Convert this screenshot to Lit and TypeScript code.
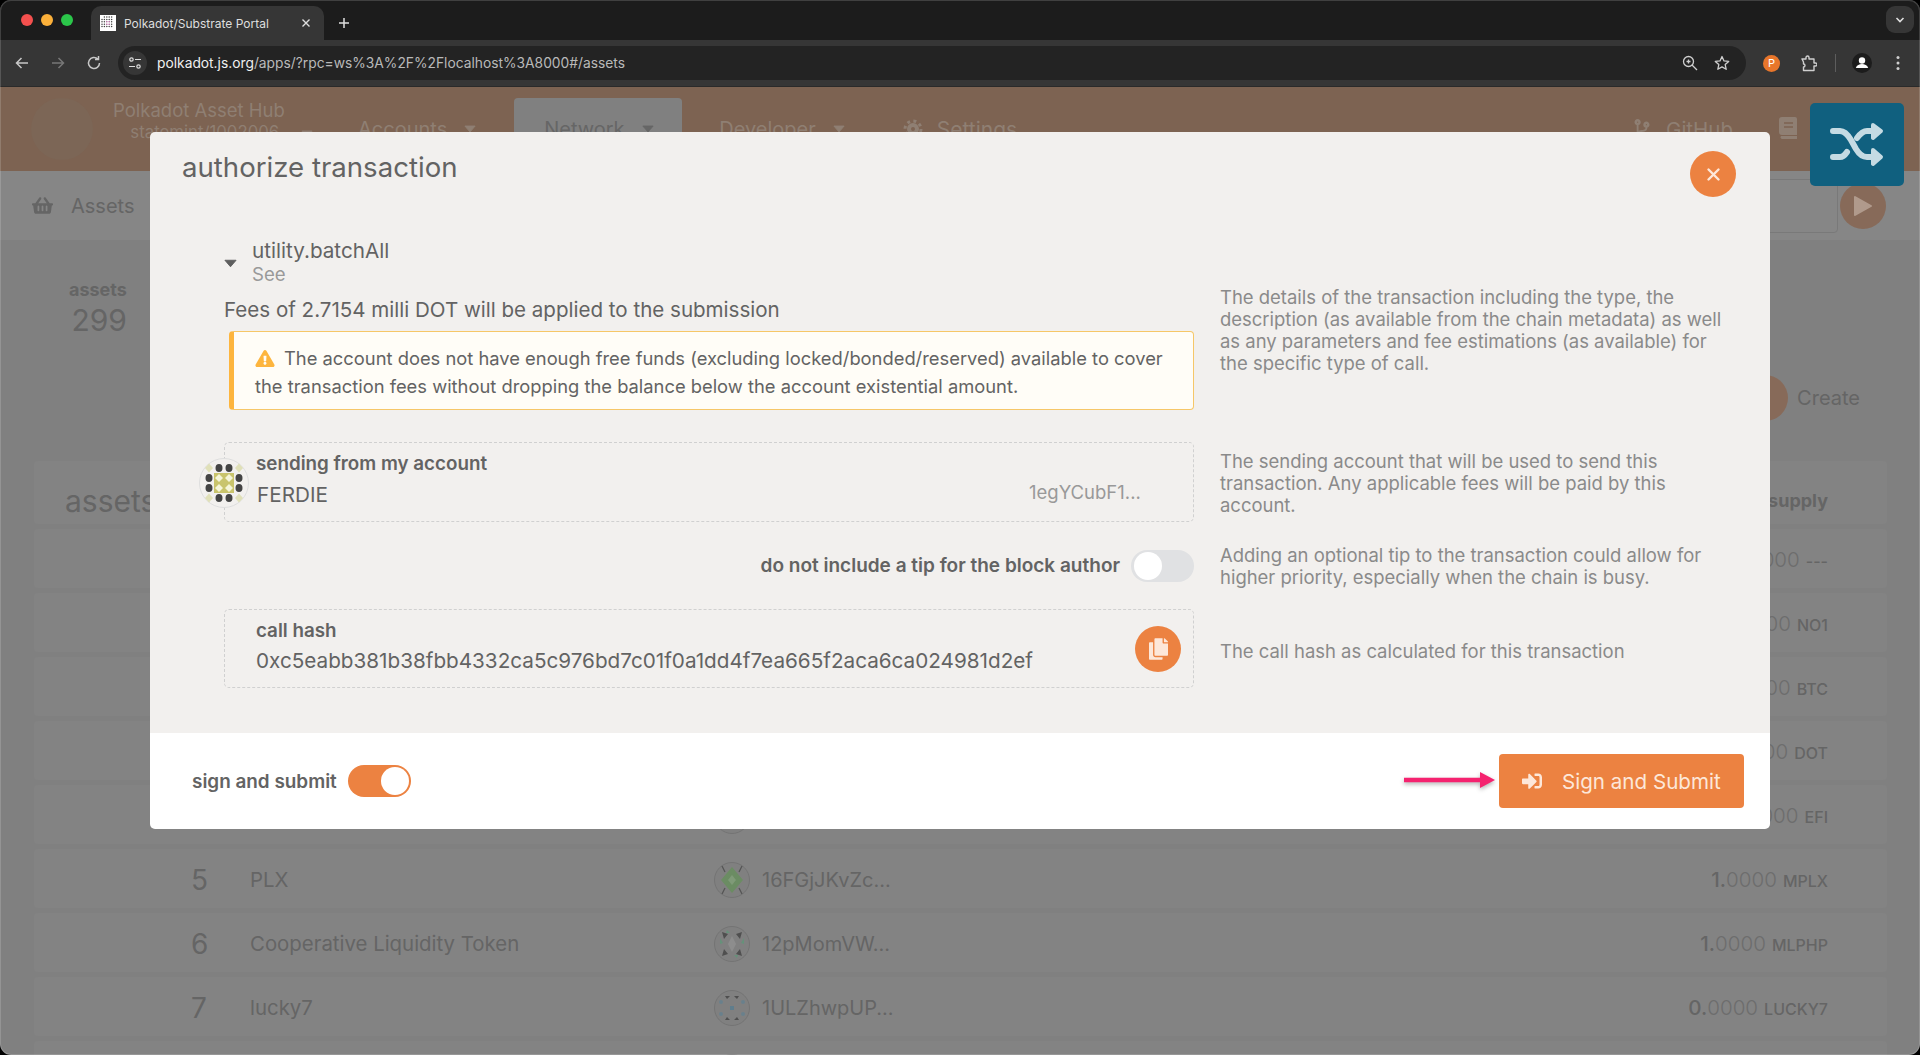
import { LitElement, html, css, svg } from 'lit';
import { customElement } from 'lit/decorators.js';

interface AssetRow {
  id?: number;
  name?: string;
  address?: string;
  whole?: string;
  ticker?: string;
  kind: 'plain' | 'diamond' | 'shards' | 'ring';
}

const ROWS: AssetRow[] = [
  { id: 0, name: 'Asset 0', address: '14xmwinm...', whole: '10.', ticker: '---', kind: 'plain' },
  { id: 1, name: 'No1', address: '15WjYZYk...', whole: '1.', ticker: 'NO1', kind: 'plain' },
  { id: 2, name: 'Bitcoin', address: '12gfQnGk...', whole: '1.', ticker: 'BTC', kind: 'plain' },
  { id: 3, name: 'Polkadot', address: '1BzDKzCq...', whole: '1.', ticker: 'DOT', kind: 'plain' },
  { id: 4, name: 'Efinity', address: '16ZLYmYw...', whole: '10.', ticker: 'EFI', kind: 'plain' },
  { id: 5, name: 'PLX', address: '16FGjJKvZc...', whole: '1.', ticker: 'MPLX', kind: 'diamond' },
  { id: 6, name: 'Cooperative Liquidity Token', address: '12pMomVW...', whole: '1.', ticker: 'MLPHP', kind: 'shards' },
  { id: 7, name: 'lucky7', address: '1ULZhwpUP...', whole: '0.', ticker: 'LUCKY7', kind: 'ring' },
  // only the top of this row's avatar shows above the fold
  { kind: 'plain' },
];

const rowIdenticon = (kind: AssetRow['kind']) => {
  const shapes = {
    plain: svg`<path d="M18 5l5 6h-10zM18 31l5-6h-10zM5 18l6-5v10zM31 18l-6-5v10z" fill="#5a6a68"/>`,
    diamond: svg`
      <path d="M18 5l11 13-11 13-11-13z" fill="#6b8c63"/>
      <path d="M18 13l4 5-4 5-4-5z" fill="#7f9a78"/>
      <path d="M8 4l3 6M28 4l-3 6M8 32l3-6M28 32l-3-6" stroke="#555" stroke-width="1.3" fill="none"/>`,
    shards: svg`
      <path d="M8 6l6 2-4 5zM28 6l-6 2 4 5zM8 30l6-2-4-5zM28 30l-6-2 4-5z" fill="#4f4f4f"/>
      <path d="M6 12l3 5-3 1zM30 12l-3 5 3 1zM13 4l3 3h-4zM23 32l-3-3h4z" fill="#66917a"/>
      <path d="M18 10l4 8-4 8-4-8z" fill="#8d8d8d"/>`,
    ring: svg`
      <path d="M11 6h5l-3 3zM25 6h-5l3 3zM11 30h5l-3-3zM25 30h-5l3-3z" fill="#4f4f4f"/>
      <circle cx="7" cy="12" r="2" fill="#69808c"/><circle cx="29" cy="12" r="2" fill="#69808c"/>
      <circle cx="7" cy="24" r="2" fill="#69808c"/><circle cx="29" cy="24" r="2" fill="#69808c"/>
      <rect x="16" y="16" width="4" height="4" fill="#5f7d8c"/>`,
  };
  return html`<svg class="row-avatar" viewBox="0 0 36 36">
    <circle cx="18" cy="18" r="17.5" fill="#808080" stroke="#747474"/>${shapes[kind]}
  </svg>`;
};

const caret = html`<svg class="caret" viewBox="0 0 14 9"><path d="M1 1h12L7 8z" fill="currentColor" stroke="currentColor" stroke-linejoin="round"/></svg>`;

// favicon dots, kept inside a circle like the portal's logo
const FAVICON_DOTS: number[][] = [];
for (let x = 2; x <= 14; x += 2.4) {
  for (let y = 2; y <= 14; y += 2.4) {
    if (Math.hypot(x - 8, y - 8) < 7) FAVICON_DOTS.push([x, y]);
  }
}

@customElement('app-root')
export class AppRoot extends LitElement {
  static styles = css`
    :host {
      display: block;
      height: 1055px;
      background: #000;
      overflow: hidden;
      font-family: Inter, 'Liberation Sans', sans-serif;
    }
    .window {
      position: relative;
      height: 1055px;
      border-radius: 11px;
      overflow: hidden;
      background: #808080;
      color: #656565;
    }
    .window::after {
      content: '';
      position: absolute;
      inset: 0;
      border-radius: 11px;
      box-shadow: inset 0 0 0 1px rgba(255, 255, 255, 0.16);
      pointer-events: none;
    }

    /* browser chrome */
    .tabstrip {
      height: 40px;
      background: #1c1c1c;
      display: flex;
      align-items: flex-end;
      padding-left: 21px;
      box-sizing: border-box;
      color: #dedede;
    }
    .lights {
      display: flex;
      gap: 8px;
      align-self: center;
      width: 70px;
    }
    .light {
      width: 12px;
      height: 12px;
      border-radius: 50%;
    }
    .light.red { background: #f4504e; }
    .light.amber { background: #fbb03a; }
    .light.green { background: #2bc64a; }
    .tab {
      width: 233px;
      height: 34px;
      background: #363636;
      border-radius: 10px 10px 0 0;
      display: flex;
      align-items: center;
      padding-left: 9px;
      box-sizing: border-box;
      font-size: 12px;
    }
    .favicon {
      width: 16px;
      height: 16px;
      margin-right: 8px;
      flex: none;
    }
    .tab-title {
      width: 176px;
      white-space: nowrap;
    }
    .tab-close,
    .new-tab {
      width: 12px;
      height: 12px;
      flex: none;
    }
    .new-tab {
      margin: 0 0 11px 14px;
    }
    .tab-list {
      margin: 6px 6px 0 auto;
      align-self: flex-start;
      width: 28px;
      height: 27px;
      border-radius: 9px;
      background: #363636;
      display: flex;
      align-items: center;
      justify-content: center;
    }
    .toolbar {
      height: 47px;
      background: #363636;
      display: flex;
      align-items: center;
      box-sizing: border-box;
      padding-left: 14px;
      color: #c7c7c7;
      border-bottom: 1px solid #2a2a2a;
    }
    .nav-icon {
      width: 16px;
      height: 16px;
      flex: none;
      margin-right: 20px;
    }
    .nav-icon.off { color: #777; }
    .omnibox {
      width: 1628px;
      height: 34px;
      margin-left: -4px;
      border-radius: 17px;
      background: #232323;
      display: flex;
      align-items: center;
      font-size: 13.8px;
      color: #b9b9b9;
      flex: none;
    }
    .site-settings {
      width: 24px;
      height: 24px;
      margin: 0 10px 0 5px;
      border-radius: 50%;
      background: #363636;
      display: flex;
      align-items: center;
      justify-content: center;
    }
    .url-host { color: #f0f0f0; }
    .omni-end {
      margin-left: auto;
      display: flex;
      gap: 16px;
      padding-right: 16px;
      color: #cfcfcf;
    }
    .omni-icon {
      width: 16px;
      height: 16px;
    }
    .ext {
      display: flex;
      align-items: center;
      margin-left: 17px;
    }
    .ext-dot {
      width: 17px;
      height: 17px;
      border-radius: 50%;
      background: #e8762b;
      color: #fff;
      font-size: 11px;
      text-align: center;
      line-height: 17px;
    }
    .puzzle {
      width: 17px;
      height: 17px;
      margin-left: 20px;
    }
    .divider {
      width: 1px;
      height: 18px;
      background: #5d5d5d;
      margin: 0 16px 0 18px;
    }
    .profile {
      width: 20px;
      height: 20px;
    }
    .dots {
      width: 4px;
      height: 16px;
      margin-left: 24px;
    }

    /* dimmed app */
    .app-bar {
      height: 84px;
      background: #7d6352;
      display: flex;
      color: #8f7f73;
      font-size: 20px;
      box-sizing: border-box;
      padding: 11px 0 0 31px;
    }
    .logo {
      width: 62px;
      height: 62px;
      border-radius: 50%;
      background: #7c6656;
      flex: none;
    }
    .chain {
      width: 171px;
      margin-left: 20px;
      text-align: right;
      white-space: nowrap;
      font-size: 18.5px;
      line-height: 24px;
    }
    .chain-sub {
      font-size: 16.8px;
      line-height: 20px;
      margin-right: -29px;
    }
    .caret {
      width: 12px;
      height: 8px;
      margin-left: 17px;
      color: inherit;
    }
    .nav-item {
      display: flex;
      align-items: center;
      height: 62px;
      white-space: nowrap;
    }
    .nav-item.accounts { margin-left: 74px; }
    .nav-item.network {
      margin-left: 38px;
      width: 168px;
      height: 73px;
      padding: 0 0 11px 30px;
      box-sizing: border-box;
      background: #808080;
      border-radius: 4px 4px 0 0;
      color: #666;
    }
    .nav-item.developer { margin-left: 37px; }
    .nav-item.settings { margin-left: 58px; font-size: 21px; }
    .nav-glyph {
      width: 20px;
      height: 20px;
      margin-right: 14px;
      flex: none;
    }
    .nav-item.github { margin-left: auto; font-size: 20.5px; }
    .book {
      width: 18px;
      height: 22px;
      margin: 19px 123px 0 46px;
      flex: none;
      align-self: flex-start;
    }
    .tabs-row {
      height: 69px;
      background: #868686;
      display: flex;
      align-items: center;
      box-sizing: border-box;
      padding: 0 34px 0 32px;
      font-size: 20px;
    }
    .basket {
      width: 21px;
      height: 19px;
      margin-right: 18px;
    }
    .search {
      margin-left: auto;
      width: 400px;
      height: 54px;
      box-sizing: border-box;
      border: 1px solid #797979;
      border-radius: 4px;
    }
    .run {
      width: 46px;
      height: 46px;
      margin-left: 2px;
      border-radius: 50%;
      background: #876a59;
      display: flex;
      align-items: center;
      justify-content: center;
    }
    .run-glyph {
      width: 20px;
      height: 22px;
    }
    .summary {
      height: 221px;
      display: flex;
      box-sizing: border-box;
      padding: 39px 60px 0 69px;
    }
    .stat {
      text-align: right;
    }
    .stat-label {
      font-size: 18px;
      font-weight: 700;
      line-height: 22px;
    }
    .stat-value {
      font-size: 30px;
      line-height: 38px;
    }
    .create {
      margin: 96px 0 0 auto;
      display: flex;
      align-items: center;
      font-size: 20px;
      height: 46px;
      gap: 9px;
    }
    .create-btn {
      width: 46px;
      height: 46px;
      border-radius: 50%;
      background: #876a59;
    }
    .table {
      margin: 0 33px 0 34px;
      display: flex;
      flex-direction: column;
      gap: 5px;
    }
    .table-head,
    .row {
      background: #838383;
      border-radius: 4px;
      display: flex;
      align-items: center;
      box-sizing: border-box;
    }
    .table-head {
      height: 63px;
      font-size: 30px;
      padding: 16px 59px 0 31px;
    }
    .head-supply {
      margin-left: auto;
      font-size: 18px;
      font-weight: 700;
    }
    .row {
      height: 59px;
      padding: 2px 59px 0 157px;
      font-size: 20px;
      flex: none;
    }
    .row-id {
      width: 59px;
      font-size: 28px;
      flex: none;
    }
    .row-name {
      width: 464px;
      font-size: 20.4px;
      flex: none;
    }
    .row-avatar {
      width: 36px;
      height: 36px;
      margin-right: 12px;
      flex: none;
    }
    .row-supply {
      margin-left: auto;
      font-size: 20.6px;
      font-weight: 500;
      white-space: nowrap;
    }
    .frac {
      font-weight: 300;
      color: #6d6d6d;
    }
    .ticker {
      font-size: 16px;
      margin-left: 6px;
    }

    /* overlays */
    .shuffle {
      position: absolute;
      left: 1810px;
      top: 103px;
      width: 94px;
      height: 83px;
      border-radius: 5px;
      background: #10607f;
      display: flex;
      align-items: center;
      justify-content: center;
      z-index: 2;
    }
    .shuffle-glyph {
      width: 54px;
      height: 46px;
    }
    .modal {
      position: absolute;
      left: 150px;
      top: 132px;
      width: 1620px;
      border-radius: 5px;
      overflow: hidden;
      color: #636363;
      z-index: 1;
    }
    .modal-body {
      background: #f2f0ee;
      height: 601px;
      box-sizing: border-box;
      padding: 0 35px 0 74px;
      position: relative;
    }
    .modal-title {
      font-size: 27.6px;
      line-height: 34px;
      margin-left: -42px;
      padding-top: 18px;
      height: 107px;
      box-sizing: border-box;
    }
    .close {
      position: absolute;
      top: 19px;
      right: 34px;
    }
    .round-btn {
      width: 46px;
      height: 46px;
      border-radius: 50%;
      background: #ec8241;
      display: flex;
      align-items: center;
      justify-content: center;
      flex: none;
    }
    .close-glyph {
      width: 15px;
      height: 15px;
    }
    .columns {
      display: grid;
      grid-template-columns: 970px 1fr;
      column-gap: 26px;
    }
    .columns.gap-lg { margin-top: 32px; }
    .columns.gap-sm { margin-top: 21px; }
    .help {
      font-size: 18.47px;
      line-height: 22px;
      color: #8a8a8a;
    }
    .help.first { padding-top: 47px; }
    .help.second { padding-top: 8px; }
    .help.center { align-self: center; padding-top: 1px; }
    .help.low { padding-top: 4px; }
    .call {
      display: grid;
      grid-template-columns: 28px 1fr;
      align-items: center;
    }
    .call-caret {
      width: 13px;
      height: 9px;
      color: #5e5e5e;
      margin-top: 2px;
    }
    .call-name {
      font-size: 20.7px;
      line-height: 24px;
    }
    .call-doc {
      font-size: 18.6px;
      line-height: 22px;
      color: #999;
    }
    .fees {
      font-size: 20.55px;
      line-height: 24px;
      margin-top: 13px;
    }
    .warning {
      margin: 9px 0 0 5px;
      height: 79px;
      box-sizing: border-box;
      background: #fffdf7;
      border: 1px solid #f6c768;
      border-left: 5px solid #fdb53e;
      border-radius: 4px;
      padding: 12px 16px 0 21px;
      font-size: 18.35px;
      line-height: 28px;
    }
    .warn-glyph {
      width: 20px;
      height: 17px;
      margin-right: 9px;
      vertical-align: -2px;
    }
    .field {
      position: relative;
      border: 1px dashed #d0d0d0;
      border-radius: 5px;
      box-sizing: border-box;
      height: 80px;
      padding: 9px 0 0 31px;
    }
    .field.hash { height: 79px; }
    .field-label {
      font-size: 18.8px;
      font-weight: 600;
      line-height: 24px;
    }
    .field-line {
      display: flex;
      align-items: center;
      font-size: 20.7px;
      line-height: 30px;
      margin-top: 4px;
      padding-left: 1px;
    }
    .field.hash .field-line { padding-left: 0; margin-top: 3px; }
    .address {
      margin-left: auto;
      width: 164px;
      font-size: 18.5px;
      color: #999;
      margin-top: -6px;
    }
    .avatar {
      position: absolute;
      left: -26px;
      top: 15px;
      width: 50px;
      height: 50px;
    }
    .copy {
      position: absolute;
      right: 12px;
      top: 16px;
    }
    .copy-glyph {
      width: 19px;
      height: 22px;
    }
    .tip {
      display: flex;
      align-items: center;
      justify-content: flex-end;
      font-size: 19px;
      font-weight: 600;
      gap: 11px;
    }
    .switch {
      width: 63px;
      height: 32px;
      border-radius: 16px;
      box-sizing: border-box;
      display: flex;
      padding: 2px 3px;
      flex: none;
    }
    .switch.off { background: #e0e1e3; }
    .switch.on { background: #ec8241; justify-content: flex-end; padding: 2px; }
    .knob {
      width: 28px;
      height: 28px;
      border-radius: 50%;
      background: #fff;
    }
    .modal-foot {
      position: relative;
      background: #fff;
      height: 96px;
      display: flex;
      align-items: center;
      padding: 0 26px 0 42px;
    }
    .foot-toggle {
      display: flex;
      align-items: center;
      gap: 11px;
      font-size: 18.9px;
      font-weight: 600;
    }
    .submit {
      margin-left: auto;
      width: 245px;
      height: 54px;
      border-radius: 4px;
      background: #ec8241;
      color: #fde7d9;
      display: flex;
      align-items: center;
      box-sizing: border-box;
      padding-left: 22px;
      font-size: 20.6px;
    }
    .submit-glyph {
      width: 22px;
      height: 20px;
      margin-right: 19px;
    }
    .pointer {
      position: absolute;
      left: 1254px;
      top: 37px;
      width: 92px;
      height: 20px;
      filter: drop-shadow(0 2px 2px rgba(0, 0, 0, 0.3));
    }
  `;

  private renderChrome() {
    return html`
      <div class="tabstrip">
        <div class="lights">
          <span class="light red"></span><span class="light amber"></span><span class="light green"></span>
        </div>
        <div class="tab">
          <svg class="favicon" viewBox="0 0 16 16">
            <rect width="16" height="16" fill="#fff"/>
            ${FAVICON_DOTS.map(([x, y]) => svg`<circle cx=${x} cy=${y} r="0.75" fill=${Math.hypot(x - 8, y - 8) < 3 ? '#a04a8a' : '#444'}/>`)}
          </svg>
          <span class="tab-title">Polkadot/Substrate Portal</span>
          <svg class="tab-close" viewBox="0 0 12 12"><path d="M2.5 2.5l7 7M9.5 2.5l-7 7" stroke="currentColor" stroke-width="1.4"/></svg>
        </div>
        <svg class="new-tab" viewBox="0 0 12 12"><path d="M6 1v10M1 6h10" stroke="currentColor" stroke-width="1.5"/></svg>
        <div class="tab-list">
          <svg width="10" height="8" viewBox="0 0 10 8"><path d="M1.5 2l3.5 3.5L8.500 2" fill="none" stroke="currentColor" stroke-width="1.6"/></svg>
        </div>
      </div>
      <div class="toolbar">
        <svg class="nav-icon" viewBox="0 0 16 16"><path d="M14 8H2.500M7.500 3l-5 5 5 5" fill="none" stroke="currentColor" stroke-width="1.5"/></svg>
        <svg class="nav-icon off" viewBox="0 0 16 16"><path d="M2 8h11.500M8.500 3l5 5-5 5" fill="none" stroke="currentColor" stroke-width="1.5"/></svg>
        <svg class="nav-icon" viewBox="0 0 16 16"><path d="M13.500 8a5.500 5.500 0 1 1-1.700-4M12.500 1v3.500H9" fill="none" stroke="currentColor" stroke-width="1.5"/></svg>
        <div class="omnibox">
          <span class="site-settings">
            <svg width="14" height="14" viewBox="0 0 14 14" fill="none" stroke="#ddd" stroke-width="1.200">
              <circle cx="3.500" cy="3.500" r="1.700"/><path d="M7 3.500h6M1 10.500h6"/><circle cx="10.500" cy="10.500" r="1.700"/>
            </svg>
          </span>
          <span><span class="url-host">polkadot.js.org</span>/apps/?rpc=ws%3A%2F%2Flocalhost%3A8000#/assets</span>
          <span class="omni-end">
            <svg class="omni-icon" viewBox="0 0 16 16" fill="none" stroke="currentColor" stroke-width="1.300">
              <circle cx="6.500" cy="6.500" r="5"/><path d="M10 10l5 5M4.500 6.500h4M6.500 4.500v4"/>
            </svg>
            <svg class="omni-icon" viewBox="0 0 16 16" fill="none" stroke="currentColor" stroke-width="1.300">
              <path d="M8 1.500l2 4.400 4.700.5-3.500 3.200 1 4.700L8 11.900l-4.200 2.400 1-4.700L1.300 6.400 6 5.900z" stroke-linejoin="round"/>
            </svg>
          </span>
        </div>
        <div class="ext">
          <span class="ext-dot">P</span>
          <svg class="puzzle" viewBox="0 0 17 17" fill="none" stroke="#cfcfcf" stroke-width="1.400">
            <path d="M2 4h4V2.500a1.500 1.500 0 0 1 3 0V4h5v4h1.500a1.500 1.500 0 0 1 0 3H14v4.500H3.500V12a1.500 1.500 0 0 0 0-3V7z" stroke-linejoin="round"/>
          </svg>
          <span class="divider"></span>
          <svg class="profile" viewBox="0 0 20 20">
            <circle cx="10" cy="10" r="10" fill="#1c1c1c"/><circle cx="10" cy="7.500" r="3.200" fill="#fff"/>
            <path d="M3.800 15c1-3 3.500-4 6.200-4s5.200 1 6.200 4z" fill="#fff"/>
          </svg>
          <svg class="dots" viewBox="0 0 4 16" fill="#cfcfcf"><circle cx="2" cy="2.500" r="1.500"/><circle cx="2" cy="8" r="1.500"/><circle cx="2" cy="13.500" r="1.500"/></svg>
        </div>
      </div>
    `;
  }

  private renderPage() {
    return html`
      <div class="app-bar">
        <div class="logo"></div>
        <div class="chain">Polkadot Asset Hub<div class="chain-sub">statemint/1002006 ${caret}</div></div>
        <div class="nav-item accounts">Accounts ${caret}</div>
        <div class="nav-item network">Network ${caret}</div>
        <div class="nav-item developer">Developer ${caret}</div>
        <div class="nav-item settings">
          <svg class="nav-glyph" viewBox="0 0 20 20" fill="none" stroke="currentColor"><circle cx="10" cy="10" r="4" stroke-width="4"/><circle cx="10" cy="10" r="8" stroke-width="3" stroke-dasharray="3 3.300"/></svg>
          Settings
        </div>
        <div class="nav-item github">
          <svg class="nav-glyph" viewBox="0 0 384 512"><path fill="currentColor" d="M384 144c0-44.200-35.800-80-80-80s-80 35.800-80 80c0 36.400 24.300 67.100 57.500 76.800-.6 16.100-4.200 28.500-11 36.900-15.400 19.200-49.300 22.400-85.200 25.700-28.200 2.600-57.400 5.400-81.300 16.900v-144c32.500-10.200 56-40.500 56-76.300 0-44.200-35.800-80-80-80S0 35.800 0 80c0 35.800 23.500 66.100 56 76.300v199.300C23.500 365.900 0 396.200 0 432c0 44.200 35.800 80 80 80s80-35.800 80-80c0-34-21.200-63.100-51.200-74.600 3.100-5.200 7.800-9.800 14.900-13.400 16.200-8.200 40.400-10.400 66.100-12.800 42.200-3.900 90-8.400 118.200-43.400 14-17.400 21.100-39.800 21.600-67.900 31.600-10.800 54.400-40.700 54.400-75.900zM80 64c8.800 0 16 7.200 16 16s-7.200 16-16 16-16-7.200-16-16 7.200-16 16-16zm0 384c-8.800 0-16-7.200-16-16s7.200-16 16-16 16 7.200 16 16-7.200 16-16 16zm224-320c8.800 0 16 7.200 16 16s-7.200 16-16 16-16-7.200-16-16 7.200-16 16-16z"/></svg>
          GitHub
        </div>
        <svg class="book" viewBox="0 0 18 22">
          <path fill="currentColor" d="M3 0h13a2 2 0 0 1 2 2v16H3a3 3 0 0 1-3-3V3a3 3 0 0 1 3-3zM2 19h16v3H3a2 2 0 0 1-1-3z"/>
          <path d="M5 6h9M5 10h9" stroke="#7d6352" stroke-width="1.500"/>
        </svg>
      </div>
      <div class="tabs-row">
        <svg class="basket" viewBox="0 0 576 512"><path fill="currentColor" d="M576 216v16c0 13.255-10.745 24-24 24h-8l-26.113 182.788C514.509 462.435 494.257 480 470.370 480H105.630c-23.887 0-44.139-17.565-47.518-41.212L32 256h-8c-13.255 0-24-10.745-24-24v-16c0-13.255 10.745-24 24-24h67.341l106.780-146.821c10.395-14.292 30.407-17.453 44.701-7.058 14.293 10.395 17.453 30.408 7.058 44.701L170.477 192h235.046L326.120 82.821c-10.395-14.292-7.234-34.306 7.059-44.701 14.291-10.395 34.306-7.235 44.701 7.058L484.659 192H552c13.255 0 24 10.745 24 24zM312 392V280c0-13.255-10.745-24-24-24s-24 10.745-24 24v112c0 13.255 10.745 24 24 24s24-10.745 24-24zm112 0V280c0-13.255-10.745-24-24-24s-24 10.745-24 24v112c0 13.255 10.745 24 24 24s24-10.745 24-24zm-224 0V280c0-13.255-10.745-24-24-24s-24 10.745-24 24v112c0 13.255 10.745 24 24 24s24-10.745 24-24z"/></svg>
        Assets
        <div class="search"></div>
        <div class="run"><svg class="run-glyph" viewBox="0 0 20 22"><path d="M2 2l16 9-16 9z" fill="#b09a8c" stroke="#b09a8c" stroke-width="2" stroke-linejoin="round"/></svg></div>
      </div>
      <div class="summary">
        <div class="stat">
          <div class="stat-label">assets</div>
          <div class="stat-value">299</div>
        </div>
        <div class="create"><span class="create-btn"></span>Create</div>
      </div>
      <div class="table">
        <div class="table-head">assets<span class="head-supply">supply</span></div>
        ${ROWS.map(
          (row) => html`
            <div class="row">
              <span class="row-id">${row.id}</span>
              <span class="row-name">${row.name}</span>
              ${rowIdenticon(row.kind)}
              ${row.address
                ? html`<span>${row.address}</span>
                    <span class="row-supply">${row.whole}<span class="frac">0000</span><span class="ticker">${row.ticker}</span></span>`
                : ''}
            </div>
          `
        )}
      </div>
    `;
  }

  private renderModal() {
    return html`
      <div class="modal">
        <div class="modal-body">
          <div class="modal-title">authorize transaction</div>
          <div class="round-btn close">
            <svg class="close-glyph" viewBox="0 0 15 15"><path d="M2.500 2.500l10 10M12.500 2.500l-10 10" stroke="#fde7d9" stroke-width="2.400" stroke-linecap="round"/></svg>
          </div>

          <div class="columns">
            <div>
              <div class="call">
                <svg class="call-caret" viewBox="0 0 14 9"><path d="M1 1h12L7 8z" fill="currentColor" stroke="currentColor" stroke-linejoin="round"/></svg>
                <div>
                  <div class="call-name">utility.batchAll</div>
                  <div class="call-doc">See</div>
                </div>
              </div>
              <div class="fees">Fees of 2.7154 milli DOT will be applied to the submission</div>
              <div class="warning">
                <svg class="warn-glyph" viewBox="0 0 576 512"><path fill="#fdb53e" d="M569.517 440.013C587.975 472.007 564.806 512 527.940 512H48.054c-36.937 0-59.999-40.055-41.577-71.987L246.423 24.035c18.467-32.009 64.720-31.951 83.154 0l239.940 416.028zM288 354c-25.405 0-46 20.595-46 46s20.595 46 46 46 46-20.595 46-46-20.595-46-46-46zm-43.673-165.346l7.418 136c.347 6.364 5.609 11.346 11.982 11.346h48.546c6.373 0 11.635-4.982 11.982-11.346l7.418-136c.375-6.874-5.098-12.654-11.982-12.654h-63.383c-6.884 0-12.356 5.780-11.981 12.654z"/></svg>The account does not have enough free funds (excluding locked/bonded/reserved) available to cover the transaction fees without dropping the balance below the account existential amount.
              </div>
            </div>
            <div class="help first">The details of the transaction including the type, the description (as available from the chain metadata) as well as any parameters and fee estimations (as available) for the specific type of call.</div>
          </div>

          <div class="columns gap-lg">
            <div class="field">
              <svg class="avatar" viewBox="0 0 50 50">
                <circle cx="25" cy="25" r="24.500" fill="#f2f0ee" stroke="#dedede"/>
                ${[[10, 10], [40, 10], [10, 40], [40, 40]].map(([x, y]) => svg`<path d="M${x} ${y - 4.5}l4 4.500-4 4.500-4-4.500z" fill="#e0e0b8"/>`)}
                ${[[20, 10], [30, 10], [10, 20], [40, 20], [10, 30], [40, 30], [20, 40], [30, 40]].map(([x, y]) => svg`<ellipse cx=${x} cy=${y} rx="3.500" ry="4" fill="#444"/>`)}
                <rect x="15" y="15" width="20" height="20" fill="#c9c46c"/>
                ${[[20, 20], [30, 20], [20, 30], [30, 30]].map(([x, y]) => svg`<path d="M${x} ${y - 4}l4 4-4 4-4-4z" fill="#f5f5d8"/>`)}
              </svg>
              <div class="field-label">sending from my account</div>
              <div class="field-line">FERDIE<span class="address">1egYCubF1...</span></div>
            </div>
            <div class="help second">The sending account that will be used to send this transaction. Any applicable fees will be paid by this account.</div>
          </div>

          <div class="columns gap-sm">
            <div class="tip">do not include a tip for the block author<span class="switch off"><span class="knob"></span></span></div>
            <div class="help center">Adding an optional tip to the transaction could allow for higher priority, especially when the chain is busy.</div>
          </div>

          <div class="columns gap-sm">
            <div class="field hash">
              <div class="field-label">call hash</div>
              <div class="field-line">0xc5eabb381b38fbb4332ca5c976bd7c01f0a1dd4f7ea665f2aca6ca024981d2ef</div>
              <div class="round-btn copy">
                <svg class="copy-glyph" viewBox="0 0 448 512"><path fill="#fde7d9" d="M320 448v40c0 13.255-10.745 24-24 24H24c-13.255 0-24-10.745-24-24V120c0-13.255 10.745-24 24-24h72v296c0 30.879 25.121 56 56 56h168zm0-344V0H152c-13.255 0-24 10.745-24 24v368c0 13.255 10.745 24 24 24h272c13.255 0 24-10.745 24-24V128H344c-13.200 0-24-10.800-24-24zm120.971-31.029L375.029 7.029A24 24 0 0 0 358.059 0H352v96h96v-6.059a24 24 0 0 0-7.029-16.970z"/></svg>
              </div>
            </div>
            <div class="help center low">The call hash as calculated for this transaction</div>
          </div>
        </div>
        <div class="modal-foot">
          <div class="foot-toggle">sign and submit<span class="switch on"><span class="knob"></span></span></div>
          <div class="submit">
            <svg class="submit-glyph" viewBox="0 0 512 512"><path fill="#fde7d9" d="M416 448h-84c-6.600 0-12-5.400-12-12v-40c0-6.600 5.400-12 12-12h84c17.700 0 32-14.300 32-32V160c0-17.700-14.300-32-32-32h-84c-6.600 0-12-5.400-12-12V76c0-6.600 5.400-12 12-12h84c53 0 96 43 96 96v192c0 53-43 96-96 96zm-47-201L201 79c-15-15-41-4.500-41 17v96H24c-13.300 0-24 10.700-24 24v96c0 13.300 10.700 24 24 24h136v96c0 21.500 26 32 41 17l168-168c9.300-9.400 9.300-24.600 0-34z"/></svg>
            Sign and Submit
          </div>
          <svg class="pointer" viewBox="0 0 92 20"><path d="M0 7.800h76V2l15 8-15 8v-5.800H0z" fill="#f5226f"/></svg>
        </div>
      </div>
    `;
  }

  render() {
    return html`
      <div class="window">
        ${this.renderChrome()}
        ${this.renderPage()}
        ${this.renderModal()}
        <div class="shuffle">
          <svg class="shuffle-glyph" viewBox="0 0 54 46" fill="none" stroke="#c5dbe3" stroke-width="6" stroke-linecap="round">
            <path d="M3 9h7c5 0 8 4 11 9l5 9c3 5 6 8 11 8h5"/>
            <path d="M3 35h7c3 0 5-2 7-5"/>
            <path d="M27 16c3-4 6-7 10-7h5"/>
            <path d="M43 3l8 6-8 7zM43 28l8 7-8 7z" fill="#c5dbe3" stroke-width="4" stroke-linejoin="round"/>
          </svg>
        </div>
      </div>
    `;
  }
}

declare global {
  interface HTMLElementTagNameMap {
    'app-root': AppRoot;
  }
}
